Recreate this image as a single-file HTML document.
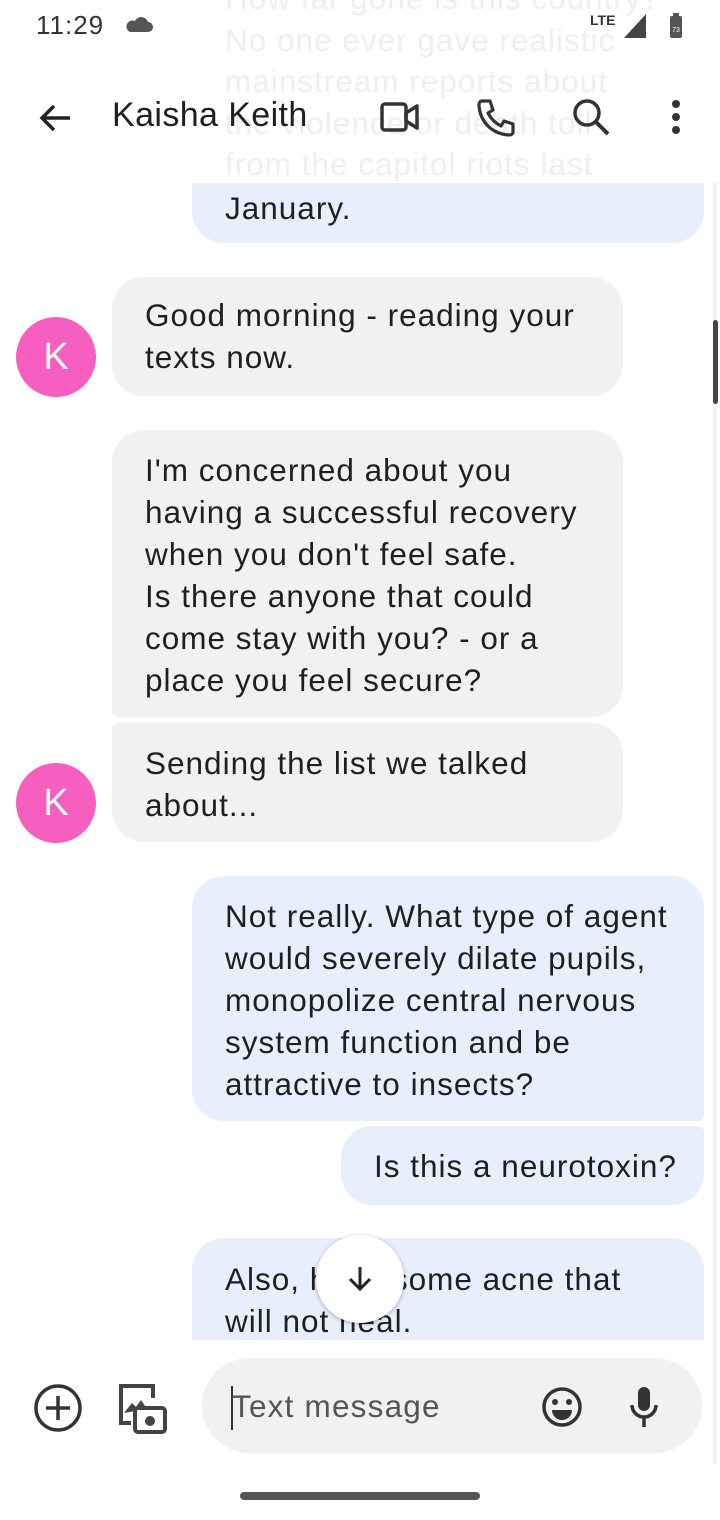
<!DOCTYPE html>
<html><head><meta charset="utf-8"><style>
body{margin:0;width:720px;height:1520px;background:#fff;position:relative;overflow:hidden;font-family:"Liberation Sans",Roboto,sans-serif;color:#1f1f1f}
.a{position:absolute}
.b{position:absolute;font-size:31.5px;line-height:42px;padding:0 33px;box-sizing:border-box;letter-spacing:1px;white-space:nowrap}
.s{background:#e8effc}
.r{background:#f1f1f1}
.av{position:absolute;width:80px;height:80px;border-radius:50%;background:#f65fbf;color:#fff;font-size:38px;text-align:center;line-height:80px;left:16px}
.ghost{position:absolute;left:225px;top:-22px;font-size:31.5px;letter-spacing:1px;line-height:41.5px;color:#efefef;white-space:nowrap}
</style></head><body>
<div class="ghost">How far gone is this country?<br>No one ever gave realistic<br>mainstream reports about<br>the violence or death toll<br>from the capitol riots last</div>
<div class="a" style="left:36px;top:10px;font-size:26px;letter-spacing:1px;color:#333">11:29</div>
<svg class="a" style="left:124px;top:16px" width="30" height="18"><path d="M6 16h18a5 5 0 0 0 0-10 7 7 0 0 0-13-1A5.5 5.5 0 0 0 6 16z" fill="#555"/></svg>
<div class="a" style="left:590px;top:12px;font-size:14px;font-weight:bold;color:#333">LTE</div>
<svg class="a" style="left:622px;top:12px" width="26" height="28"><path d="M24 2V26H2z" fill="#444"/></svg>
<svg class="a" style="left:667px;top:12px" width="18" height="28"><rect x="3" y="4" width="12" height="22" rx="2" fill="#555"/><rect x="6" y="1" width="6" height="4" fill="#555"/><text x="9" y="20" font-size="7" fill="#fff" text-anchor="middle">73</text></svg>
<svg class="a" style="left:36px;top:98px" width="40" height="40"><path d="M34 20H6M18 8L6 20l12 12" stroke="#222" stroke-width="3.5" fill="none"/></svg>
<div class="a" style="left:112px;top:96px;font-size:34px;letter-spacing:0.4px;color:#1f1f1f">Kaisha Keith</div>
<svg class="a" style="left:378px;top:100px" width="44" height="34"><rect x="4" y="4" width="24" height="26" rx="3" stroke="#333" stroke-width="3.5" fill="none"/><path d="M28 13l11-7v22l-11-7z" stroke="#333" stroke-width="3.5" fill="none" stroke-linejoin="round"/></svg>
<svg class="a" style="left:474px;top:96px" width="44" height="44"><path d="M8 5h8l3 9-5 3c3 6 7 10 13 13l3-5 9 3v8c0 2-2 3-4 3C18 38 6 26 5 9c0-2 1-4 3-4z" stroke="#333" stroke-width="3.2" fill="none" stroke-linejoin="round"/></svg>
<svg class="a" style="left:570px;top:96px" width="44" height="44"><circle cx="17" cy="17" r="12" stroke="#333" stroke-width="3.5" fill="none"/><path d="M26 26l12 12" stroke="#333" stroke-width="4"/></svg>
<svg class="a" style="left:666px;top:98px" width="20" height="40"><circle cx="10" cy="6" r="4" fill="#333"/><circle cx="10" cy="19" r="4" fill="#333"/><circle cx="10" cy="32" r="4" fill="#333"/></svg>

<div class="a" style="left:713px;top:183px;width:4px;height:1280px;background:#f2f2f2"></div>
<div class="a" style="left:713px;top:320px;width:5px;height:84px;background:#444;border-radius:3px"></div>

<div class="b s" style="left:192px;top:183px;width:512px;height:60px;padding-top:4px;border-radius:0 0 32px 32px">January.</div>

<div class="b r" style="left:112px;top:277px;width:511px;height:119px;padding-top:17px;border-radius:32px">Good morning - reading your<br>texts now.</div>
<div class="av" style="top:317px">K</div>

<div class="b r" style="left:112px;top:430px;width:511px;height:287px;padding-top:19px;border-radius:32px 32px 32px 6px">I'm concerned about you<br>having a successful recovery<br>when you don't feel safe.<br>Is there anyone that could<br>come stay with you? - or a<br>place you feel secure?</div>
<div class="b r" style="left:112px;top:723px;width:511px;height:119px;padding-top:19px;border-radius:6px 32px 32px 32px">Sending the list we talked<br>about...</div>
<div class="av" style="top:763px">K</div>

<div class="b s" style="left:192px;top:876px;width:512px;height:245px;padding-top:19px;border-radius:32px 32px 6px 32px">Not really. What type of agent<br>would severely dilate pupils,<br>monopolize central nervous<br>system function and be<br>attractive to insects?</div>
<div class="b s" style="left:341px;top:1126px;width:363px;height:79px;padding-top:19px;border-radius:32px 6px 32px 32px">Is this a neurotoxin?</div>
<div class="b s" style="left:192px;top:1238px;width:512px;height:102px;padding-top:20px;border-radius:32px 32px 0 0;overflow:hidden">Also, have some acne that<br>will not heal.</div>
<div class="a" style="left:316px;top:1235px;width:88px;height:88px;border-radius:50%;background:#fff;box-shadow:0 1px 4px rgba(0,0,0,.3)"></div>
<svg class="a" style="left:344px;top:1263px" width="32" height="32"><path d="M16 4v22M6 16l10 10 10-10" stroke="#222" stroke-width="3" fill="none"/></svg>

<svg class="a" style="left:33px;top:1383px" width="50" height="50"><circle cx="25" cy="25" r="22" stroke="#333" stroke-width="3.5" fill="none"/><path d="M25 13v24M13 25h24" stroke="#333" stroke-width="3.5"/></svg>
<svg class="a" style="left:116px;top:1383px" width="52" height="52"><path d="M20 3H5v37h10" stroke="#444" stroke-width="4" fill="none"/><path d="M20 3h17v12" stroke="#444" stroke-width="4" fill="none"/><path d="M8 30l8-10 4 4 5-7 6 9" fill="#444"/><rect x="19" y="25" width="30" height="24" rx="3" stroke="#444" stroke-width="4" fill="#fff"/><circle cx="34" cy="38" r="5" fill="#444"/></svg>
<div class="a" style="left:202px;top:1358px;width:500px;height:95px;border-radius:48px;background:#f1f1f1"></div>
<div class="a" style="left:231px;top:1386px;width:1.5px;height:44px;background:#333"></div>
<div class="a" style="left:232px;top:1388px;font-size:31.5px;letter-spacing:1.2px;color:#555">Text message</div>
<svg class="a" style="left:540px;top:1385px" width="44" height="44"><circle cx="22" cy="22" r="18" stroke="#333" stroke-width="3.5" fill="none"/><circle cx="15" cy="17" r="3" fill="#333"/><circle cx="29" cy="17" r="3" fill="#333"/><path d="M12 25h20a10 10 0 0 1-20 0z" fill="#333"/></svg>
<svg class="a" style="left:628px;top:1385px" width="32" height="44"><rect x="10" y="2" width="12" height="24" rx="6" fill="#333"/><path d="M4 20a12 12 0 0 0 24 0M16 32v10" stroke="#333" stroke-width="3.5" fill="none"/></svg>
<div class="a" style="left:240px;top:1492px;width:240px;height:8px;border-radius:4px;background:#555"></div>
</body></html>
